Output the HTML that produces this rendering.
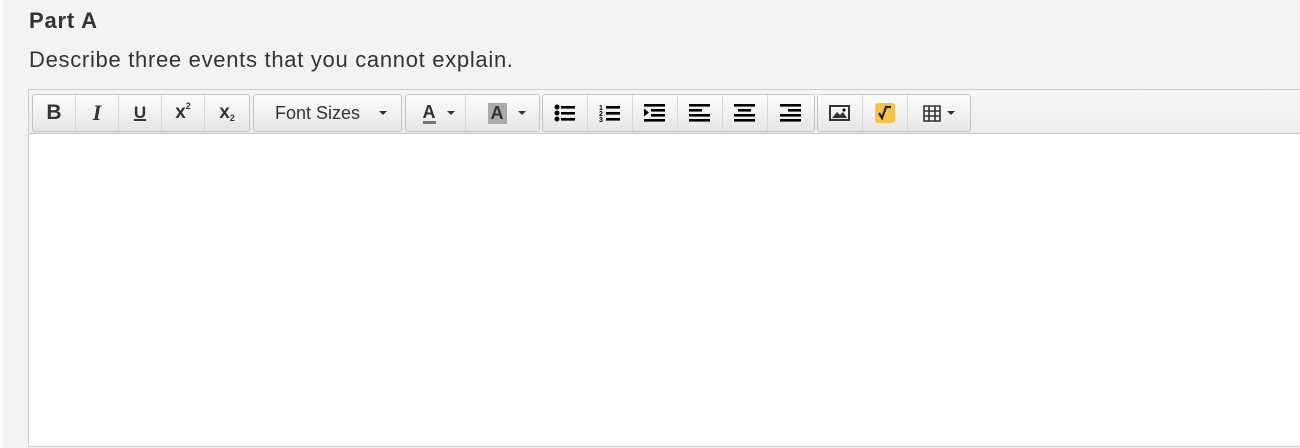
<!DOCTYPE html><html><head><style>
body{margin:0;width:1300px;height:448px;background:#f2f3f5;font-family:"Liberation Sans",sans-serif;position:relative;overflow:hidden}
.l{position:absolute;left:0;top:0;width:3px;height:448px;background:#fff}
h1{position:absolute;left:29px;top:8px;margin:0;font-size:22px;letter-spacing:0.8px;font-weight:bold;color:#333}
p{position:absolute;left:29px;top:47px;margin:0;font-size:22px;letter-spacing:0.7px;color:#333}
.ed{position:absolute;left:28px;top:89px;width:1280px;height:356px;background:#fff;border:1px solid #ccc}
.tb{position:absolute;left:0;top:0;right:0;height:43px;background:linear-gradient(#f6f6f6,#ececec);border-bottom:1px solid #c5c5c5}
.g{position:absolute;top:4px;height:36px;border:1px solid #c5c5c5;border-radius:3px;background:linear-gradient(#fdfdfd,#e6e6e6);display:flex}
.b{height:36px;border-right:1px solid #d8d8d8;display:flex;align-items:center;justify-content:center;font-size:17px;color:#333;box-sizing:border-box}
.b:last-child{border-right:none}
.c{display:inline-block;width:0;height:0;border-left:4px solid transparent;border-right:4px solid transparent;border-top:4px solid #333;margin-left:12px}
</style></head><body><div class="l"></div>
<h1>Part A</h1>
<p>Describe three events that you cannot explain.</p>
<div class="ed"><div class="tb">
<div class="g" style="left:3px;width:216px">
<div class="b" style="width:43px;font-weight:bold;font-size:21px">B</div>
<div class="b" style="width:43px;font-style:italic;font-weight:bold;font-family:'Liberation Serif';font-size:22px">I</div>
<div class="b" style="width:43px;text-decoration:underline;text-decoration-thickness:2px;font-weight:bold;font-size:17px">U</div>
<div class="b" style="width:43px;font-size:19px;font-weight:bold">x<span style="font-size:9px;position:relative;top:-7px">2</span></div>
<div class="b" style="width:44px;font-size:19px;font-weight:bold">x<span style="font-size:9px;position:relative;top:5px">2</span></div>
</div>
<div class="g" style="left:224px;width:147px"><div class="b" style="width:147px;justify-content:space-between;padding:0 14px 0 21px;font-size:18px">Font Sizes<span class="c"></span></div></div>
<div class="g" style="left:376px;width:133px">
<div class="b" style="width:60px;font-weight:bold;font-size:18px;padding-left:6px"><span style="border-bottom:3px solid #777;line-height:18px">A</span><span class="c" style="margin-left:11px"></span></div>
<div class="b" style="width:73px;font-weight:bold;font-size:18px;padding-left:8px"><span style="background:#aaa;padding:0 3px;line-height:21px">A</span><span class="c" style="margin-left:11px"></span></div>
</div>
<div class="g" style="left:513px;width:271px">
<div class="b" style="width:45px"><svg width="22" height="18"><circle cx="3" cy="3" r="2.5"/><circle cx="3" cy="9" r="2.5"/><circle cx="3" cy="15" r="2.5"/><rect x="7" y="2" width="14" height="2.6"/><rect x="7" y="8" width="14" height="2.6"/><rect x="7" y="14" width="14" height="2.6"/></svg></div>
<div class="b" style="width:45px"><svg width="22" height="18"><text x="0" y="6" font-size="7" font-weight="bold">1</text><text x="0" y="12" font-size="7" font-weight="bold">2</text><text x="0" y="18" font-size="7" font-weight="bold">3</text><rect x="7" y="2" width="14" height="2.6"/><rect x="7" y="8" width="14" height="2.6"/><rect x="7" y="14" width="14" height="2.6"/></svg></div>
<div class="b" style="width:45px"><svg width="22" height="18"><rect x="0" y="0" width="21" height="2.6"/><polygon points="0,4.5 5,8.5 0,12.5"/><rect x="7" y="5" width="14" height="2.6"/><rect x="7" y="10" width="14" height="2.6"/><rect x="0" y="15" width="21" height="2.6"/></svg></div>
<div class="b" style="width:45px"><svg width="22" height="18"><rect x="0" y="0" width="21" height="2.6"/><rect x="0" y="5" width="13" height="2.6"/><rect x="0" y="10" width="21" height="2.6"/><rect x="0" y="15" width="21" height="2.6"/></svg></div>
<div class="b" style="width:45px"><svg width="22" height="18"><rect x="0" y="0" width="21" height="2.6"/><rect x="4" y="5" width="13" height="2.6"/><rect x="0" y="10" width="21" height="2.6"/><rect x="0" y="15" width="21" height="2.6"/></svg></div>
<div class="b" style="width:46px"><svg width="22" height="18"><rect x="0" y="0" width="21" height="2.6"/><rect x="8" y="5" width="13" height="2.6"/><rect x="0" y="10" width="21" height="2.6"/><rect x="0" y="15" width="21" height="2.6"/></svg></div>
</div>
<div class="g" style="left:788px;width:152px">
<div class="b" style="width:45px"><svg width="22" height="18"><rect x="1" y="2" width="19" height="14" fill="none" stroke="#333" stroke-width="2"/><polygon points="3,14 8,8 11,11 14,8 18,14" fill="#333"/><circle cx="15" cy="6" r="1.5"/></svg></div>
<div class="b" style="width:45px"><svg width="20" height="20"><rect width="20" height="20" rx="3" fill="#f8c34a"/><path d="M4 10 L7 15 L11 4 L16 4" stroke="#222" stroke-width="2.2" fill="none"/></svg></div>
<div class="b" style="width:62px"><svg width="18" height="17"><path d="M1 1H17V16H1ZM1 6H17M1 11H17M6 1V16M12 1V16" stroke="#333" stroke-width="1.6" fill="none"/></svg><span class="c" style="margin-left:6px"></span></div>
</div>
</div></div>
</body></html>
